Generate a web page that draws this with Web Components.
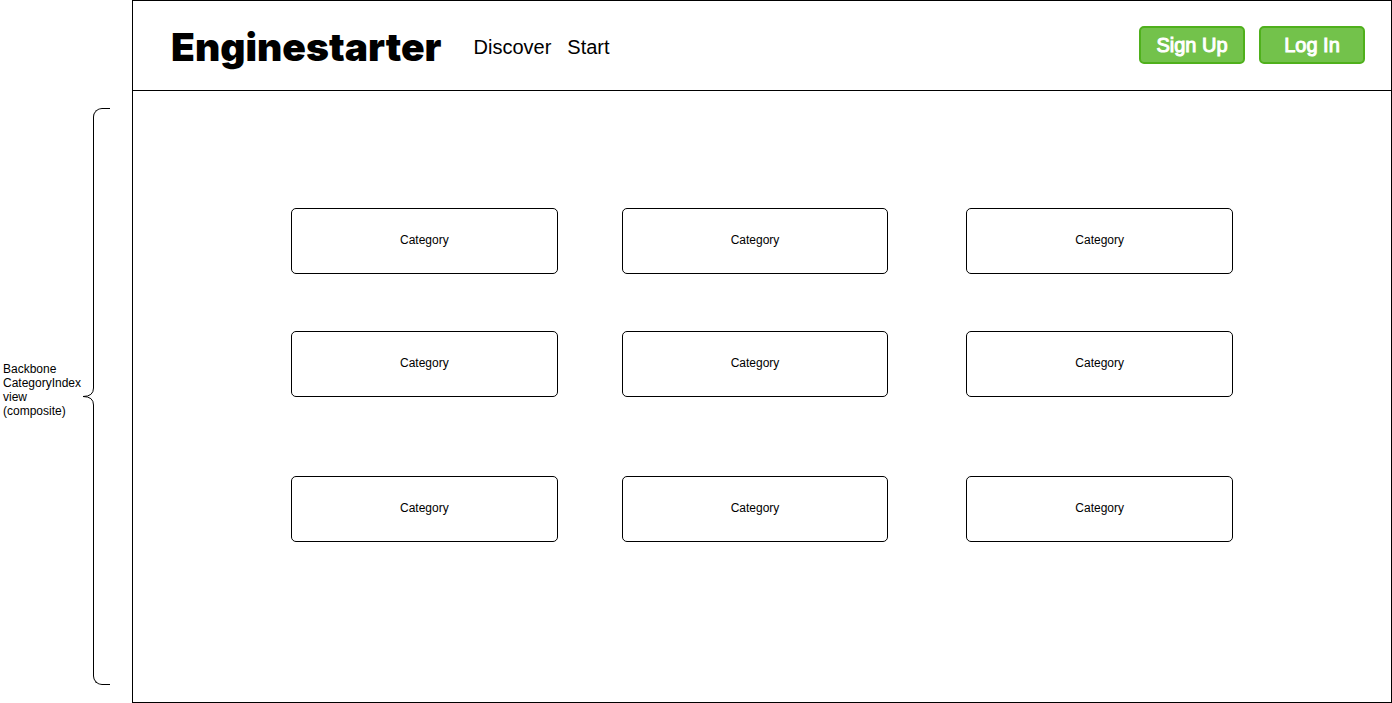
<!DOCTYPE html>
<html lang="en">
<head>
<meta charset="utf-8">
<title>Enginestarter</title>
<style>
  html, body { margin: 0; height: 100%; }
  body { background: #fff; color: #000; font: 12px/14px "Liberation Sans", Arial, Helvetica, sans-serif; }
</style>
</head>
<body>
<wire-page>
  <view-note slot="note">Backbone CategoryIndex view (composite)</view-note>
  <site-header slot="header">
    <span slot="brand">Enginestarter</span>
    <nav-link slot="nav" href="#discover">Discover</nav-link>
    <nav-link slot="nav" href="#start">Start</nav-link>
    <green-button slot="actions">Sign Up</green-button>
    <green-button slot="actions">Log In</green-button>
  </site-header>
  <category-row>
    <category-card>Category</category-card>
    <category-card>Category</category-card>
    <category-card>Category</category-card>
  </category-row>
  <category-row>
    <category-card>Category</category-card>
    <category-card>Category</category-card>
    <category-card>Category</category-card>
  </category-row>
  <category-row>
    <category-card>Category</category-card>
    <category-card>Category</category-card>
    <category-card>Category</category-card>
  </category-row>
</wire-page>
<script>
  const define = (name, html) => customElements.define(name, class extends HTMLElement {
    constructor() {
      super();
      this.attachShadow({ mode: "open" }).innerHTML = html;
    }
    connectedCallback() {
      const link = this.shadowRoot.querySelector("a");
      if (link) link.href = this.getAttribute("href") || "#";
    }
  });

  define("wire-page", `
    <style>
      :host { display: grid; grid-template-columns: 132px minmax(0, 1fr); min-height: 100%; }
      aside { display: flex; padding: 108px 22px 18px 3px; }
      .frame { display: flex; flex-direction: column; border: 1px solid #000; }
      main { flex: 1; padding: 117px 158px; }
      ::slotted(category-row:nth-of-type(2)) { margin-top: 57px; }
      ::slotted(category-row:nth-of-type(3)) { margin-top: 79px; }
    </style>
    <aside><slot name="note"></slot></aside>
    <div class="frame">
      <slot name="header"></slot>
      <main><slot></slot></main>
    </div>`);

  define("view-note", `
    <style>
      :host { display: flex; flex: 1; }
      p { width: 80px; margin: 0 0 14px; align-self: center; }
      curly-brace { flex: 1; }
    </style>
    <p><slot></slot></p>
    <curly-brace></curly-brace>`);

  define("curly-brace", `
    <style>
      :host { display: flex; flex-direction: column; }
      .arm { flex: 1; margin-left: 10px; border-left: 1px solid #000; }
      .top { border-top: 1px solid #000; border-top-left-radius: 9px; }
      .bottom { border-bottom: 1px solid #000; border-bottom-left-radius: 9px; }
      svg { display: block; flex: none; }
    </style>
    <div class="arm top"></div>
    <svg width="12" height="17" viewBox="0 0 12 17" fill="none" stroke="#000" aria-hidden="true">
      <path d="M10.5 0Q10.5 8.5 0 8.5Q10.5 8.5 10.5 17"/>
    </svg>
    <div class="arm bottom"></div>`);

  define("site-header", `
    <style>
      :host { display: block; }
      header { display: flex; align-items: center; height: 89px; padding: 0 26px 0 38px; border-bottom: 1px solid #000; }
      h1 { margin: 0 32px 0 0; padding-top: 2px; font: 900 39px/44px Inter, "Arial Black", sans-serif; }
      nav { display: flex; gap: 16px; padding-top: 2px; }
      .actions { display: flex; gap: 14px; margin-left: auto; padding-bottom: 2px; }
    </style>
    <header>
      <h1><slot name="brand"></slot></h1>
      <nav><slot name="nav"></slot></nav>
      <div class="actions"><slot name="actions"></slot></div>
    </header>`);

  define("nav-link", `
    <style>
      :host { display: block; }
      a { display: block; color: #000; font-size: 20px; line-height: 24px; text-decoration: none; }
    </style>
    <a href="#"><slot></slot></a>`);

  define("green-button", `
    <style>
      :host { display: block; }
      button { display: block; width: 106px; height: 38px; padding: 0; border: 2px solid #4fb01c; border-radius: 5px;
        background: #73c24b; color: #fff; font: 20px/24px "Liberation Sans", Arial, sans-serif; -webkit-text-stroke: 1px #fff; }
    </style>
    <button type="button"><slot></slot></button>`);

  define("category-row", `
    <style>
      :host { display: flex; }
      ::slotted(*) { flex: 1; }
      ::slotted(:nth-child(2)) { margin: 0 78px 0 64px; }
    </style>
    <slot></slot>`);

  define("category-card", `
    <style>
      :host { display: block; }
      div { padding: 24px 0 26px; border: 1px solid #000; border-radius: 5px; text-align: center; }
    </style>
    <div><slot></slot></div>`);
</script>
</body>
</html>
